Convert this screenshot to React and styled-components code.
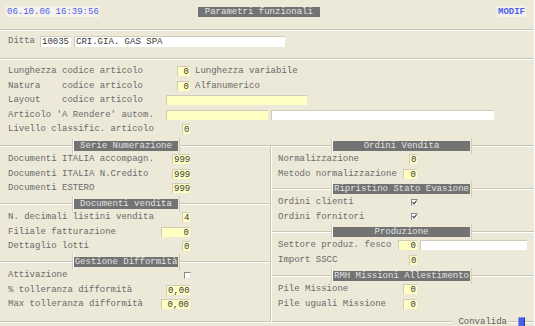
import React from 'react';
import styled, {createGlobalStyle} from 'styled-components';

// Page reset
const GlobalStyle = createGlobalStyle`
  html, body {
    margin: 0;
    padding: 0;
    background: #ECE9D8;
  }
  body {
    font-family: "Liberation Mono", "Courier New", monospace;
  }
`;

const topRows = [
    {label: 'Lunghezza codice articolo', value: '0', w: 13, after: 'Lunghezza variabile'},
    {label: 'Natura    codice articolo', value: '0', w: 13, after: 'Alfanumerico'},
    {label: 'Layout    codice articolo', wide: [{w: 141, tone: 'yellow'}]},
    {label: "Articolo 'A Rendere' autom.", wide: [{w: 102, tone: 'yellow'}, {w: 223, tone: 'white'}]},
    {label: 'Livello classific. articolo', value: '0', w: 8},
];

const leftSections = [
    {
        title: 'Serie Numerazione', h: 58,
        rows: [
            {label: 'Documenti ITALIA accompagn.', value: '999', w: 18},
            {label: 'Documenti ITALIA N.Credito', value: '999', w: 18},
            {label: 'Documenti ESTERO', value: '999', w: 18},
        ],
    },
    {
        title: 'Documenti vendita', h: 58,
        rows: [
            {label: 'N. decimali listini vendita', value: '4', w: 8},
            {label: 'Filiale fatturazione', value: '0', w: 29},
            {label: 'Dettaglio lotti', value: '0', w: 8},
        ],
    },
    {
        title: 'Gestione Difformità', h: 59,
        rows: [
            {label: 'Attivazione', check: false},
            {label: '% tolleranza difformità', value: '0,00', w: 24},
            {label: 'Max tolleranza difformità', value: '0,00', w: 29},
        ],
    },
];

const rightSections = [
    {
        title: 'Ordini Vendita', h: 43,
        rows: [
            {label: 'Normalizzazione', value: '0', w: 8},
            {label: 'Metodo normalizzazione', value: '0', w: 14},
        ],
    },
    {
        title: 'Ripristino Stato Evasione', h: 43,
        rows: [
            {label: 'Ordini clienti', check: true},
            {label: 'Ordini fornitori', check: true},
        ],
    },
    {
        title: 'Produzione', h: 44,
        rows: [
            {label: 'Settore produz. fesco', value: '0', w: 19, extra: 107},
            {label: 'Import SSCC', value: '0', w: 8},
        ],
    },
    {
        title: 'RMH Missioni Allestimento', h: 45,
        rows: [
            {label: 'Pile Missione', value: '0', w: 14},
            {label: 'Pile uguali Missione', value: '0', w: 14},
        ],
    },
];

const Tick = () => (
    <svg width="5" height="5" viewBox="0 0 5 5">
        <path d="M0.5 2.2 L2 3.8 L4.6 0.6" fill="none" stroke="#3C3C3C" strokeWidth="1.1"/>
    </svg>
);

const FieldRow = ({row, labelW, slotW}) => (
    <Row>
        <Label $w={labelW}>{row.label}</Label>
        {row.wide ? (
            row.wide.map((f, i) => <Field key={i} $w={f.w} $tone={f.tone} $gap={i ? 3 : 0}/>)
        ) : (
            <Slot $w={slotW}>
                {row.check !== undefined
                    ? <Check>{row.check && <Tick/>}</Check>
                    : <Field $w={row.w} $tone="yellow">{row.value}</Field>}
            </Slot>
        )}
        {row.after && <After>{row.after}</After>}
        {row.extra && <Field $w={row.extra} $tone="white" $gap={3}/>}
    </Row>
);

const Section = ({data, lead, legendW, labelW, slotW}) => (
    <SectionBox $h={data.h}>
        <SectionHead $lead={lead}>
            <LegendFrame>
                <Legend $w={legendW}>{data.title}</Legend>
            </LegendFrame>
        </SectionHead>
        <Body>
            {data.rows.map((r) => <FieldRow key={r.label} row={r} labelW={labelW} slotW={slotW}/>)}
        </Body>
    </SectionBox>
);

const App = () => {
    return (
        <>
            <GlobalStyle/>
            <Screen>
                <Header>
                    <Clock>06.10.06 16:39:56</Clock>
                    <Title>Parametri funzionali</Title>
                    <Mode>MODIF</Mode>
                </Header>
                <Rule/>
                <CompanyBar>
                    <span>Ditta</span>
                    <Field $w={31} $h={11} $tone="white" $gap={5} $left>10035</Field>
                    <Field $w={211} $h={11} $tone="white" $gap={3} $left>CRI.GIA. GAS SPA</Field>
                </CompanyBar>
                <Rule/>
                <TopBlock>
                    {topRows.map((r) => <FieldRow key={r.label} row={r} labelW={158} slotW={24}/>)}
                </TopBlock>
                <Columns>
                    <LeftCol>
                        {leftSections.map((s) => (
                            <Section key={s.title} data={s} lead={72} legendW={104} labelW={158} slotW={24}/>
                        ))}
                    </LeftCol>
                    <RightCol>
                        {rightSections.map((s) => (
                            <Section key={s.title} data={s} lead={61} legendW={137} labelW={120} slotW={19}/>
                        ))}
                    </RightCol>
                </Columns>
                <Footer>
                    <FooterLine $grow/>
                    <Confirm>Convalida</Confirm>
                    <FooterLine $w={10}/>
                    <ConfirmKey/>
                    <FooterLine $w={9}/>
                </Footer>
            </Screen>
        </>
    );
};

// Styles
const Screen = styled.div`
  width: 535px;
  height: 326px;
  overflow: hidden;
  background: #ECE9D8;
  color: #6A6A6A;
  font-size: 9px;
  line-height: 10px;
  border-right: 1px solid #FFFFFF;
  box-sizing: border-box;
`;

const Header = styled.div`
  display: flex;
  align-items: flex-start;
  height: 29px;
  padding-top: 6px;
  box-sizing: border-box;
`;

const Clock = styled.div`
  margin-left: 6px;
  padding: 1px 1px 0;
  height: 11px;
  box-sizing: border-box;
  background: #F4F2EA;
  color: #4F5FEC;
`;

const Title = styled.div`
  margin-left: 98px;
  margin-top: 1px;
  width: 122px;
  height: 10px;
  background: #737373;
  color: #E4E4E4;
  text-align: center;
`;

const Mode = styled.div`
  margin-left: auto;
  margin-right: 8px;
  padding: 1px 1px 0;
  height: 11px;
  box-sizing: border-box;
  background: #F4F2EA;
  color: #4F5FEC;
  font-weight: bold;
`;

const Rule = styled.div`
  height: 0;
  border-top: 1px solid #C9C5B3;
  border-bottom: 1px solid #FFFFFF;
`;

const CompanyBar = styled.div`
  display: flex;
  align-items: flex-start;
  height: 27px;
  padding: 5px 0 0 8px;
  box-sizing: border-box;

  & > span {
    line-height: 11px;
  }
`;

const Field = styled.span`
  display: block;
  flex-shrink: 0;
  width: ${p => p.$w}px;
  height: ${p => p.$h || 10}px;
  line-height: ${p => p.$h || 10}px;
  margin-left: ${p => p.$gap || 0}px;
  padding: 0 1px;
  box-sizing: border-box;
  background: ${p => p.$tone === 'white' ? '#FFFFFF' : '#FFFFC4'};
  border-top: 1px solid #CFCBBA;
  border-left: 1px solid #CFCBBA;
  color: #383838;
  text-align: ${p => p.$left ? 'left' : 'right'};
  white-space: pre;
  overflow: hidden;
`;

const TopBlock = styled.div`
  padding: 4px 0 4.5px 8px;
`;

const Row = styled.div`
  display: flex;
  align-items: center;
  height: 14.5px;
`;

const Label = styled.span`
  width: ${p => p.$w}px;
  flex-shrink: 0;
  white-space: pre;
`;

const Slot = styled.span`
  display: flex;
  justify-content: flex-end;
  width: ${p => p.$w}px;
  flex-shrink: 0;
`;

const After = styled.span`
  margin-left: 5px;
  white-space: pre;
`;

const Check = styled.span`
  display: flex;
  align-items: center;
  justify-content: center;
  width: 7px;
  height: 7px;
  margin-right: -1px;
  box-sizing: border-box;
  background: #FFFFFF;
  border-top: 1px solid #8A8A8A;
  border-left: 1px solid #8A8A8A;
  border-bottom: 1px solid #E4E2D8;
  border-right: 1px solid #E4E2D8;
`;

const Columns = styled.div`
  display: grid;
  grid-template-columns: 270px 1fr;
  height: 175px;
`;

const LeftCol = styled.div`
  display: flex;
  flex-direction: column;
`;

const RightCol = styled.div`
  position: relative;
  display: flex;
  flex-direction: column;

  &::before {
    content: '';
    position: absolute;
    top: 5px;
    bottom: -6px;
    left: 0;
    width: 1px;
    background: #C9C5B3;
    box-shadow: 1px 0 0 #FFFFFF;
  }
`;

const SectionBox = styled.div`
  height: ${p => p.$h}px;
  flex-shrink: 0;
`;

const groove = `
  content: '';
  height: 0;
  border-top: 1px solid #C9C5B3;
  border-bottom: 1px solid #FFFFFF;
`;

const SectionHead = styled.div`
  display: flex;
  align-items: center;
  height: 10px;

  &::before {
    ${groove}
    width: ${p => p.$lead}px;
    flex-shrink: 0;
  }

  &::after {
    ${groove}
    flex: 1;
  }
`;

const LegendFrame = styled.div`
  display: flex;
  align-items: center;
  height: 16px;
  margin: -3px 0;
  padding: 0 1px;
  border-left: 1px solid #D2CEBD;
  border-right: 1px solid #D2CEBD;
  box-shadow: inset 1px 0 0 #FFFFFF;
`;

const Legend = styled.div`
  width: ${p => p.$w}px;
  height: 10px;
  line-height: 10px;
  background: #737373;
  color: #E2E2E2;
  text-align: center;
  white-space: pre;
  overflow: hidden;
`;

const Body = styled.div`
  padding: 1px 0 0 8px;
`;

const Footer = styled.div`
  display: flex;
  align-items: center;
  height: 10px;
  margin-top: 1px;
`;

const FooterLine = styled.span`
  ${groove}
  flex: ${p => p.$grow ? 1 : 'none'};
  width: ${p => p.$w ? `${p.$w}px` : 'auto'};
`;

const Confirm = styled.span`
  padding: 0 1px 0 5px;
  color: #5E5E5E;
`;

const ConfirmKey = styled.span`
  flex: none;
  width: 7px;
  height: 11px;
  margin-top: 1px;
  box-sizing: border-box;
  background: #4C5DE6;
  border: 1px solid #2E3A9A;
  border-top-color: #8A94F0;
  border-left-color: #8A94F0;
`;

export default App;
